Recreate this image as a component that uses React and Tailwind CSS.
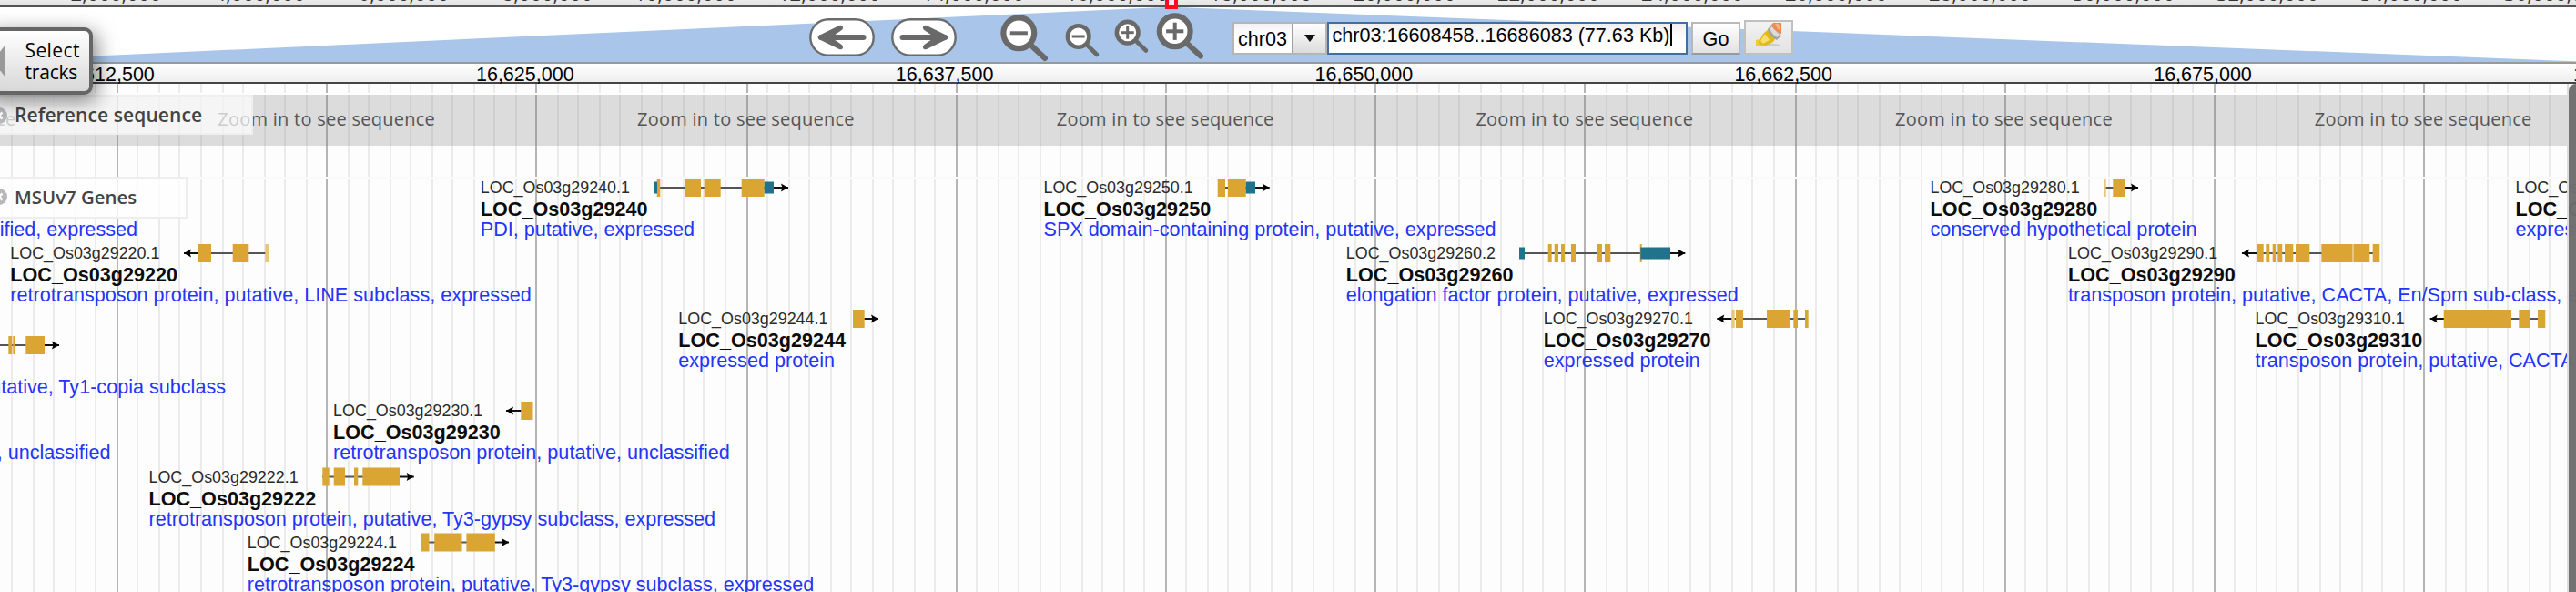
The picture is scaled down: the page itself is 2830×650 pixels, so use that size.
const GENES = [
  { id: "29240", x: 527, y: 206, dir: "r", from: 719, to: 850, tip: 866, desc: "PDI, putative, expressed",
    utr: [[718.7, 722], [839.7, 850]], cds: [[721.7, 725.3], [752, 770], [773.7, 791.7], [814.7, 839.7]] },
  { id: "29220", x: 10.5, y: 278, dir: "l", from: 218, to: 295, tip: 202, desc: "retrotransposon protein, putative, LINE subclass, expressed",
    cds: [[218, 232], [255.7, 273.3]], faint: [[291.3, 295]] },
  { id: "29244", x: 744.5, y: 350, dir: "r", from: 937, to: 950, tip: 965, desc: "expressed protein", cds: [[937, 949.7]] },
  { id: "29230", x: 365.3, y: 451, dir: "l", from: 572, to: 585, tip: 556, desc: "retrotransposon protein, putative, unclassified", cds: [[572.3, 585.5]] },
  { id: "29222", x: 162.7, y: 523.5, dir: "r", from: 354, to: 439, tip: 454.7, desc: "retrotransposon protein, putative, Ty3-gypsy subclass, expressed",
    cds: [[354.3, 361.7], [366.7, 379], [389, 393.3], [398.3, 439]] },
  { id: "29224", x: 271, y: 595.5, dir: "r", from: 462, to: 544, tip: 559, desc: "retrotransposon protein, putative, Ty3-gypsy subclass, expressed",
    cds: [[462.3, 471.5], [477.2, 507.5], [512.4, 543.8]] },
  { id: "29250", x: 1145.7, y: 206, dir: "r", from: 1338, to: 1379, tip: 1394.7, desc: "SPX domain-containing protein, putative, expressed",
    utr: [[1368.7, 1379]], cds: [[1337.7, 1346], [1349, 1368.7]] },
  { id: "29260", iso: 2, x: 1478, y: 278, dir: "r", from: 1669, to: 1835, tip: 1851.3, desc: "elongation factor protein, putative, expressed",
    cds: [[1700.7, 1704.7], [1707.7, 1712], [1715, 1719], [1726, 1731], [1755, 1760], [1763, 1769.3], [1801.7, 1803.7]],
    utr: [[1669, 1675], [1802.3, 1835]] },
  { id: "29270", x: 1695, y: 350, dir: "l", from: 1902, to: 1986, tip: 1886.3, desc: "expressed protein",
    faint: [[1902.3, 1905.7]], cds: [[1907, 1915], [1941, 1966.7], [1970.3, 1975], [1983, 1986.7]] },
  { id: "29280", x: 2119.7, y: 206, dir: "r", from: 2311, to: 2334, tip: 2349, desc: "conserved hypothetical protein",
    faint: [[2311, 2313.7]], cds: [[2321.3, 2334.3]] },
  { id: "29290", x: 2271.3, y: 278, dir: "l", from: 2479, to: 2614, tip: 2463, desc: "transposon protein, putative, CACTA, En/Spm sub-class, expressed",
    faint: [[2584, 2586]],
    cds: [[2479, 2486.7], [2489.3, 2493.3], [2496.7, 2500], [2502.3, 2507.3], [2510, 2519.3], [2522, 2537.3], [2550.3, 2584], [2586, 2603.3], [2606.7, 2614.3]] },
  { id: "29310", x: 2476.7, y: 350, dir: "l", from: 2685, to: 2796, tip: 2669.7, desc: "transposon protein, putative, CACTA, En/Spm sub-class, expressed",
    cds: [[2684.7, 2759], [2767.3, 2780], [2788, 2796.3]] },
  { id: "29320", x: 2762.7, y: 206, desc: "expressed protein" },
];

const PARTIAL_GENE = { y: 379, dir: "r", from: 0, to: 49, tip: 65, cds: [[9.3, 13.3], [14.3, 16.3], [28.3, 49]] };

const PARTIAL_LABELS = [
  { right: 151, y: 242, text: "retrotransposon protein, putative, unclassified, expressed" },
  { right: 248, y: 415, text: "retrotransposon protein, putative, Ty1-copia subclass" },
  { right: 121.5, y: 487, text: "retrotransposon protein, putative, unclassified" },
];

const LINES = Array.from({ length: 128 }, (_, i) => i - 5).map((k) => ({
  x: Math.round(63.92 + 11.52 * k) * 2,
  major: (((k % 10) + 10) % 10) === 0,
}));

const RULER = ["16,612,500", "16,625,000", "16,637,500", "16,650,000", "16,662,500", "16,675,000", "16,687,500"];

function Grid() {
  return (
    <svg className="absolute inset-0" width="2830" height="558" shapeRendering="crispEdges">
      {LINES.map(({ x, major }) => (
        <rect key={x} x={x} y="0" width="2" height="558" fill={major ? "#b5b5b5" : "#ebebeb"} />
      ))}
      <rect x="0" y="10" width="2830" height="2" fill="#fdfdfd" />
      <rect x="0" y="102" width="2830" height="2" fill="#fafafa" />
    </svg>
  );
}

function Glyph({ g }) {
  const { y, dir, from, to, tip } = g;
  const s = dir === "r" ? -1 : 1;
  const edge = dir === "r" ? to : from;
  return (
    <g>
      <rect x={from} y={y - 1} width={to - from} height="2" fill="#555" />
      <rect x={Math.min(edge, tip)} y={y - 1} width={Math.abs(tip - edge)} height="2" fill="#111" />
      <path d={`M${tip} ${y}L${tip + s * 8} ${y - 4.6}L${tip + s * 6.6} ${y}L${tip + s * 8} ${y + 4.6}Z`} fill="#000" />
      {(g.faint || []).map(([a, b]) => (
        <rect key={a} x={a} y={y - 10} width={b - a} height="20" fill="#e8c77c" />
      ))}
      {(g.cds || []).map(([a, b]) => (
        <rect key={a} x={a} y={y - 10} width={b - a} height="20" fill="#daa533" />
      ))}
      {(g.utr || []).map(([a, b]) => (
        <rect key={a} x={a} y={y - 6.5} width={b - a} height="13" fill="#1f738b" />
      ))}
    </g>
  );
}

function GeneLabel({ g }) {
  return (
    <div className="absolute whitespace-nowrap" style={{ left: g.x + 0.8, top: g.y - 92 - 12 }}>
      <div className="h-6 text-[17.9px] leading-6 text-[#2a2a2a]">LOC_Os03g{g.id}.{g.iso || 1}</div>
      <div className="h-6 text-[21.6px] leading-6 font-bold text-[#0c0c0c]">LOC_Os03g{g.id}</div>
      <div className="h-5 text-[21.6px] leading-5 text-[#2434fa]">{g.desc}</div>
    </div>
  );
}

function Magnifier({ cx, cy, r, sw, ex, ey, hw, sign, plus, ss }) {
  const d = (r + sw / 2) * 0.707;
  return (
    <g stroke="#696969" fill="none">
      <line x1={cx + d - 2} y1={cy + d - 2} x2={ex} y2={ey} strokeWidth={hw} strokeLinecap="round" />
      <circle cx={cx} cy={cy} r={r} strokeWidth={sw} fill="#fff" />
      <line x1={cx - sign} y1={cy} x2={cx + sign} y2={cy} strokeWidth={ss} />
      {plus && <line x1={cx} y1={cy - sign} x2={cx} y2={cy + sign} strokeWidth={ss} />}
    </g>
  );
}

function ArrowButton({ flip }) {
  return (
    <svg width="72" height="42" viewBox="0 0 72 42" className={flip ? "-scale-x-100" : ""}>
      <rect x="1.3" y="1.2" width="69.4" height="39.6" rx="19.8" fill="#fff" stroke="#6b6b6b" strokeWidth="2.4" />
      <path d="M13 21H59.5" stroke="#696969" strokeWidth="6" strokeLinecap="round" />
      <path d="M9.5 21Q9.5 19.4 12 18.2L33 8Q36 7 37 9.6Q37.6 12 35 13.6L24 21L35 28.4Q37.6 30 37 32.4Q36 35 33 34L12 23.8Q9.5 22.6 9.5 21Z" fill="#696969" />
    </svg>
  );
}

function Highlighter() {
  return (
    <svg width="30" height="28" viewBox="0 0 30 28">
      <path d="M1 19L10 17L12 25L1 26Z" fill="#f0cc2c" />
      <path d="M12 26H27L28 24L14 22Z" fill="#b9b9b9" opacity=".6" />
      <path d="M16 6L24 15L20 21L12 25L5 24L4 21L9 12Z" fill="#e0b91c" />
      <path d="M11 12L16 19L9 23L6 20Z" fill="#f7e06a" />
      <path d="M14 7L18 2L29 14L24 19Q16 15 14 7Z" fill="#a4a4a4" />
      <path d="M16.5 6.5L18.5 4L27 13L24.5 16Q18.5 13 16.5 6.5Z" fill="#dcdcdc" />
      <path d="M18 2L20 0H29V12L28 12Q21 9 18 2Z" fill="#f0894a" />
      <path d="M22 1H26L28 8L25 7Z" fill="#f8b184" />
    </svg>
  );
}

function TrackLabel({ title, className, textClass }) {
  return (
    <div className={"absolute left-[-12px] flex items-center border-2 " + className}>
      <svg width="18" height="18" viewBox="0 0 18 18" className="shrink-0">
        <circle cx="9" cy="9" r="9" fill="#b8b8b8" />
        <path d="M5.5 5.5L12.5 12.5M12.5 5.5L5.5 12.5" stroke="#fff" strokeWidth="2.6" />
      </svg>
      <span className={"font-semibold whitespace-nowrap text-[#444] " + textClass}>{title}</span>
    </div>
  );
}

function Overview() {
  return (
    <div className="relative h-2 shrink-0 overflow-hidden border-b-2 border-[#555] bg-linear-to-b from-[#ececec] to-[#e2e2e2] font-['Open_Sans',sans-serif]">
      {Array.from({ length: 18 }, (_, i) => (
        <div key={i} className="absolute top-[-23px] flex w-[140px] justify-end text-[22px] leading-[30px] whitespace-nowrap text-[#333]" style={{ left: 37 + 158 * i }}>
          {`${(i + 1) * 2},000,000`}
        </div>
      ))}
    </div>
  );
}

function Navigation() {
  return (
    <div className="relative h-[62px] shrink-0 border-b-2 border-[#999] bg-white">
      <svg className="absolute inset-0" width="2830" height="60">
        <path d="M-40 60L1280 0H1294L2848 60Z" fill="#a9c6ea" />
      </svg>
      <div className="absolute -top-2 left-[1280px] h-[10px] w-[14px] border-4 border-t-0 border-[#ff0d1f] bg-[#eee]" />
      <div className="relative flex h-full items-start pl-[889px]">
        <div className="flex gap-[18px] pt-3">
          <ArrowButton />
          <ArrowButton flip />
        </div>
        <svg className="ml-[38px] shrink-0" width="234" height="60" viewBox="1089 8 234 60">
          <Magnifier cx={1119.3} cy={36.3} r={16.9} sw={6.2} ex={1148} ey={64} hw={6} sign={9.6} ss={4} />
          <Magnifier cx={1184.7} cy={40} r={11.8} sw={4.6} ex={1205} ey={60} hw={4.6} sign={7} ss={3} />
          <Magnifier cx={1238.7} cy={35.7} r={11.8} sw={4.6} ex={1259} ey={55.5} hw={4.6} sign={7} ss={3} plus />
          <Magnifier cx={1290.7} cy={34.3} r={16.9} sw={6.2} ex={1319} ey={61.5} hw={6} sign={9.6} ss={4} plus />
        </svg>
        <div className="ml-[31px] flex items-start pt-4 text-[21.6px] text-black">
          <div className="flex h-9 w-[104px] border-2 border-[#b5b5b5] bg-linear-to-b from-[#f3f3f3] to-white to-40%">
            <div className="w-[63px] pl-1 leading-[33px]">chr03</div>
            <div className="flex flex-1 items-center justify-center border-l-2 border-[#a0a0a0] bg-linear-to-b from-white to-[#dcdcdc]">
              <svg width="12" height="8" viewBox="0 0 12 8"><path d="M0 0H12L6 8Z" fill="#111" /></svg>
            </div>
          </div>
          <div className="flex h-9 w-[396px] border-2 border-[#426f9f] bg-linear-to-b from-[#efefef] to-white to-50% pl-[3.5px]">
            <span className="leading-[25px] whitespace-nowrap">chr03:16608458..16686083 (77.63 Kb)</span>
            <span className="h-6 w-[2px] bg-black" />
          </div>
          <div className="ml-1 flex h-9 w-[54px] justify-center border-2 border-[#b8b8b8] border-b-[#999] bg-linear-to-b from-white to-[#e2e2e2] leading-[33px]">Go</div>
          <div className="-mt-[2px] ml-1 flex h-[38px] w-[54px] justify-center border-2 border-[#c0c0c0] bg-linear-to-b from-[#f2f2f2] to-[#e3e3e3] pt-px">
            <Highlighter />
          </div>
        </div>
      </div>
    </div>
  );
}

function Ruler() {
  return (
    <div className="relative h-[22px] shrink-0 border-b-2 border-[#444] bg-linear-to-b from-white to-[#eee]">
      {RULER.map((t, i) => (
        <div key={t} className="absolute top-0 z-10 w-40 text-center text-[21.5px] leading-[25px] text-black" style={{ left: 36 + 460.8 * i }}>{t}</div>
      ))}
    </div>
  );
}

export default function App() {
  return (
    <div className="relative flex h-[650px] w-[2830px] flex-col overflow-hidden bg-white font-['Liberation_Sans',Arial,sans-serif]">
      <Overview />
      <Navigation />
      <Ruler />
      <div className="relative flex-1 overflow-hidden bg-[#fdfdfd]">
        <Grid />
        <div className="absolute top-3 left-0 h-14 w-full bg-[#7a7a7a]/25">
          {RULER.map((t, i) => (
            <div key={t} className="absolute top-0 w-60 text-center font-['Open_Sans',sans-serif] text-[20px] leading-[54px] tracking-[0.26px] whitespace-nowrap text-[#555]" style={{ left: -222 + 460.7 * i }}>
              Zoom in to see sequence
            </div>
          ))}
        </div>
        <svg className="absolute inset-0" width="2830" height="558" viewBox="0 92 2830 558">
          <Glyph g={PARTIAL_GENE} />
          {GENES.filter((g) => g.dir).map((g) => <Glyph key={g.id} g={g} />)}
        </svg>
        {PARTIAL_LABELS.map((l) => (
          <div key={l.y} className="absolute text-[21.6px] leading-5 whitespace-nowrap text-[#2434fa]" style={{ right: 2830 - l.right, top: l.y - 92 }}>{l.text}</div>
        ))}
        {GENES.map((g) => <GeneLabel key={g.id} g={g} />)}
        <TrackLabel title="Reference sequence" className="top-3 h-11 w-[290px] border-[#ececec]/70 bg-white/70 pt-px font-['Open_Sans',sans-serif]" textClass="ml-2 text-[21px] tracking-[0.1px]" />
        <TrackLabel title="MSUv7 Genes" className="top-[102px] h-[46px] w-[218px] border-[#eee] bg-[#fefefe]/80 pb-[2px] font-['Open_Sans',sans-serif]" textClass="ml-2 text-[20.4px]" />
        <div className="absolute top-0 right-0 h-full w-[10px] border-l-2 border-[#ddd] bg-[#fdfdfd]/40">
          <div className="h-full w-4 rounded-tl-lg bg-[#6a6a6a]/95" />
        </div>
      </div>
      <div className="absolute top-[30px] -left-5 z-20 flex h-[74px] w-[122px] items-center rounded-[9px] border-4 border-[#666] bg-linear-to-b from-white to-[#d8d8d8] shadow-[4px_6px_22px_rgba(0,0,0,0.5)]">
        <svg width="24" height="36" viewBox="0 0 24 36" className="-ml-[2px]"><path d="M24 0V36L10 18Z" fill="#999" /></svg>
        <div className="ml-[21.5px] font-['Open_Sans',sans-serif] text-[21px] leading-6 text-black">
          <div className="tracking-[0.4px]">Select</div>
          <div className="tracking-[-0.2px]">tracks</div>
        </div>
      </div>
    </div>
  );
}
